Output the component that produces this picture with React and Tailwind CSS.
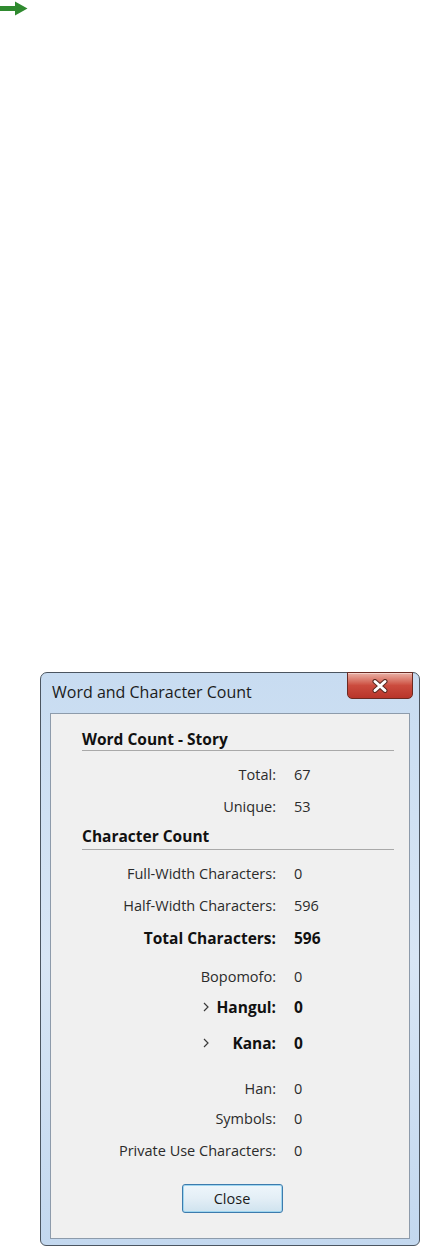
import React from 'react';

const font = { fontFamily: '"Open Sans", "Noto Sans", Arial, sans-serif' };

// one label/value line of the count table
const Row = ({ label, value, bold, chevron, className }) => (
    <div className={`flex items-center leading-[20px] ${bold ? 'text-[15.5px] font-bold text-[#111]' : 'text-[14.5px] text-[#2b2b2b]'} ${className || ''}`}>
        <div className="w-[225px] flex items-center">
            {chevron && (
                <svg width="6" height="10" viewBox="0 0 6 10" className="ml-[152px] shrink-0">
                    <path d="M1 1 L5 5 L1 9" fill="none" stroke="#3a3a3a" strokeWidth="1.2" />
                </svg>
            )}
            <span className="flex-1 text-right">{label}</span>
        </div>
        <div className="ml-[18px]">{value}</div>
    </div>
);

const SectionHeader = ({ children, className }) => (
    <div className={`ml-[31px] mr-[15px] border-b border-[#a9a9a9] font-bold text-[#111] text-[15.5px] leading-[20px] ${className || ''}`}>
        {children}
    </div>
);

const App = () => {
    return (
        <div className="w-[424px] h-[1247px] bg-white overflow-hidden flex flex-col" style={font}>
            {/* green arrow in top-left */}
            <svg width="28" height="15" viewBox="0 0 28 15" className="mt-[1px]">
                <path d="M0 5 H15 V0.5 L27.5 7.5 L15 14.5 V10 H0 Z" fill="#2f8a2f" />
            </svg>

            {/* dialog window */}
            <div className="mt-[656px] ml-[40px] w-[380px] h-[574px] rounded-t-[7px] rounded-b-[6px] border border-[#4b5560] bg-gradient-to-b from-[#c8dcf1] via-[#d8e6f5] to-[#c3d8ef] flex flex-col px-[9px] pb-[6px]">
                {/* title bar */}
                <div className="h-[40px] flex items-start justify-between">
                    <div className="mt-[9px] ml-[2px] text-[16px] leading-[20px] text-[#1b1b1b]">Word and Character Count</div>
                    <div className="mr-[-3px] mt-[-1px] w-[66px] h-[27px] rounded-b-[5px] border border-[#6b2a22] bg-gradient-to-b from-[#e8b0a6] via-[#cb4b3e] to-[#b8352a] shadow-[inset_0_1px_0_#f3cfc8] flex items-center justify-center">
                        <svg width="18" height="14" viewBox="0 0 18 14">
                            <path d="M4 2.5 L14 11.5 M14 2.5 L4 11.5" stroke="#5a2a22" strokeWidth="5" strokeLinecap="round" />
                            <path d="M4 2.5 L14 11.5 M14 2.5 L4 11.5" stroke="#ffffff" strokeWidth="3" strokeLinecap="round" />
                        </svg>
                    </div>
                </div>

                {/* client area */}
                <div className="flex-1 bg-[#f0f0f0] border border-[#8d9bab] flex flex-col">
                    <SectionHeader className="mt-[15px] pb-[1px]">Word Count - Story</SectionHeader>
                    <Row label="Total:" value="67" className="mt-[14px]" />
                    <Row label="Unique:" value="53" className="mt-[12px]" />

                    <SectionHeader className="mt-[9px] pb-[3px]">Character Count</SectionHeader>
                    <Row label="Full-Width Characters:" value="0" className="mt-[14px]" />
                    <Row label="Half-Width Characters:" value="596" className="mt-[12px]" />
                    <Row label="Total Characters:" value="596" bold className="mt-[12px]" />
                    <Row label="Bopomofo:" value="0" className="mt-[19px]" />
                    <Row label="Hangul:" value="0" bold chevron className="mt-[10px]" />
                    <Row label="Kana:" value="0" bold chevron className="mt-[16px]" />
                    <Row label="Han:" value="0" className="mt-[26px]" />
                    <Row label="Symbols:" value="0" className="mt-[10px]" />
                    <Row label="Private Use Characters:" value="0" className="mt-[12px]" />

                    <div className="flex justify-center mt-[23px]">
                        <button className="ml-[4px] w-[101px] h-[29px] rounded-[3px] border border-[#3d7bad] bg-gradient-to-b from-[#eef6fb] via-[#e3eef6] to-[#cfe3ef] shadow-[inset_0_0_0_1px_#9fd6f0] text-[14.5px] text-[#1b1b1b]">
                            Close
                        </button>
                    </div>
                </div>
            </div>
        </div>
    );
};

export default App;
